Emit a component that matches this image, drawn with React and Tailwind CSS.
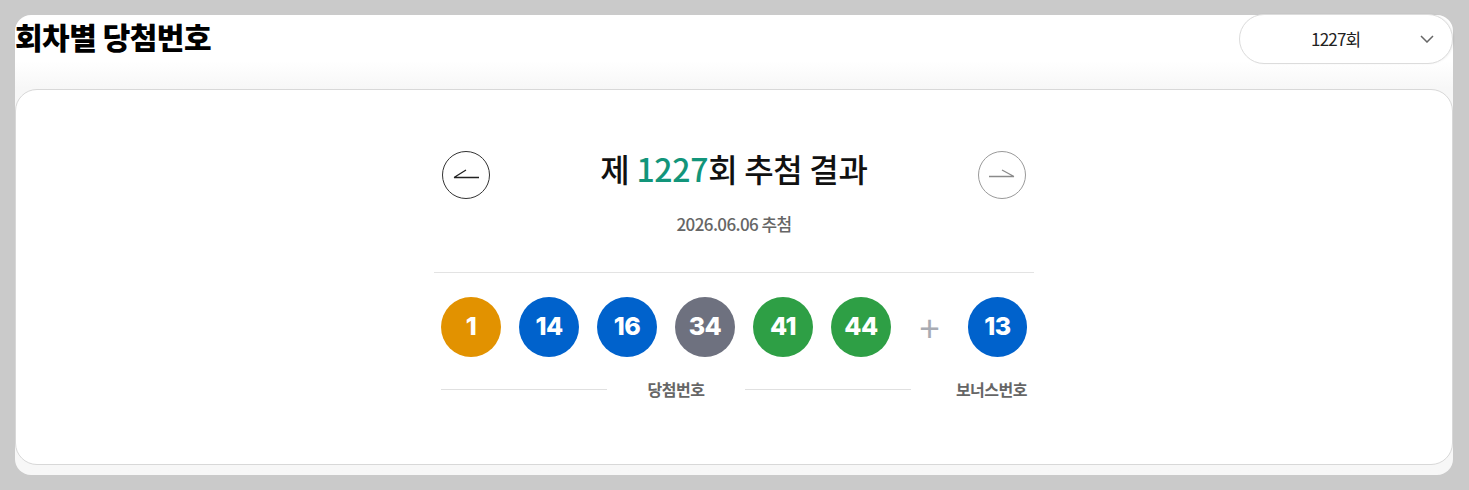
const mainNumbers = [
  { n: 1, color: "bg-[#e29200]" },
  { n: 14, color: "bg-[#0062cc]" },
  { n: 16, color: "bg-[#0062cc]" },
  { n: 34, color: "bg-[#6e717f]" },
  { n: 41, color: "bg-[#2e9f45]" },
  { n: 44, color: "bg-[#2e9f45]" },
];

const krFont = {
  fontFamily: '"Noto Sans CJK KR", "Noto Sans", sans-serif',
};

function Ball({ n, color }) {
  return (
    <div
      className={`flex h-[60px] w-[60px] items-center justify-center rounded-full text-[25px] font-extrabold tracking-[-0.5px] text-white ${color}`}
      style={{ fontFamily: '"Inter", "Noto Sans", sans-serif' }}
    >
      {n}
    </div>
  );
}

function NavButton({ dir }) {
  const dark = dir === "prev";

  return (
    <button
      className={`flex h-[48px] w-[48px] items-center justify-center rounded-full border bg-white ${
        dark ? "border-[#333]" : "border-[#9a9a9a]"
      }`}
    >
      <svg width="28" height="16" viewBox="0 0 28 16" fill="none">
        {dark ? (
          <path d="M2 10.5H27M2 10.5L14 3" stroke="#222" strokeWidth="1.3" />
        ) : (
          <path d="M1 9.5H26M26 9.5L14 3" stroke="#8a8a8a" strokeWidth="1.3" />
        )}
      </svg>
    </button>
  );
}

export default function App() {
  return (
    <div className="min-h-[490px] bg-[#cacaca] pl-[15px] pt-[15px]" style={krFont}>
      <section className="h-[460px] w-[1438px] rounded-[16px] bg-gradient-to-b from-white from-[10%] to-[#f7f7f7] to-[16%]">
        <div className="flex h-[74px] items-start justify-between">
          <h1 className="text-[30px] font-extrabold leading-[42px] tracking-[-0.5px] text-black">
            회차별 당첨번호
          </h1>

          <button className="-mt-[1px] flex h-[50px] w-[214px] items-center rounded-full border border-[#dcdcdc] bg-white pl-[71px] pr-[18px] shadow-[1px_0_2px_rgba(0,0,0,0.06)]">
            <span className="flex-1 text-left text-[17px] tracking-[-0.8px] text-[#222]">1227회</span>
            <svg width="14" height="8" viewBox="0 0 14 8" fill="none">
              <path d="M1 1L7 7L13 1" stroke="#666" strokeWidth="1.5" />
            </svg>
          </button>
        </div>

        <div className="h-[376px] rounded-[22px] border border-[#d8d8d8] bg-white">
          <div className="mx-auto w-[600px] pt-[61px]">
            <div className="flex h-[48px] items-center justify-between px-[8px]">
              <NavButton dir="prev" />
              <h2 className="pb-[14px] text-[32px] font-medium leading-[34px] tracking-[-0.3px] text-[#111]">
                제 <span className="text-[#12957a]">1227</span>회 추첨 결과
              </h2>
              <NavButton dir="next" />
            </div>

            <p className="mt-[13px] text-center text-[17px] font-medium leading-[24px] tracking-[-0.6px] text-[#666]">
              2026.06.06 추첨
            </p>

            <div className="mt-[36px] border-t border-[#e3e3e3]" />

            <div className="mt-[24px] flex items-center px-[7px]">
              <div className="flex gap-[18px]">
                {mainNumbers.map((b) => (
                  <Ball key={b.n} n={b.n} color={b.color} />
                ))}
              </div>
              <span className="flex w-[78px] justify-center pb-[2px] text-[36px] font-normal leading-none text-[#a8abb3]">
                +
              </span>
              <Ball n={13} color="bg-[#0062cc]" />
            </div>

            <div className="mt-[21px] flex items-center px-[7px] text-[16px] font-semibold leading-[22px] tracking-[-0.5px] text-[#666]">
              <div className="h-px w-[166px] bg-[#e0e0e0]" />
              <span className="w-[138px] text-center">당첨번호</span>
              <div className="h-px w-[166px] bg-[#e0e0e0]" />
              <span className="flex-1 text-right">보너스번호</span>
            </div>
          </div>
        </div>
      </section>
    </div>
  );
}
